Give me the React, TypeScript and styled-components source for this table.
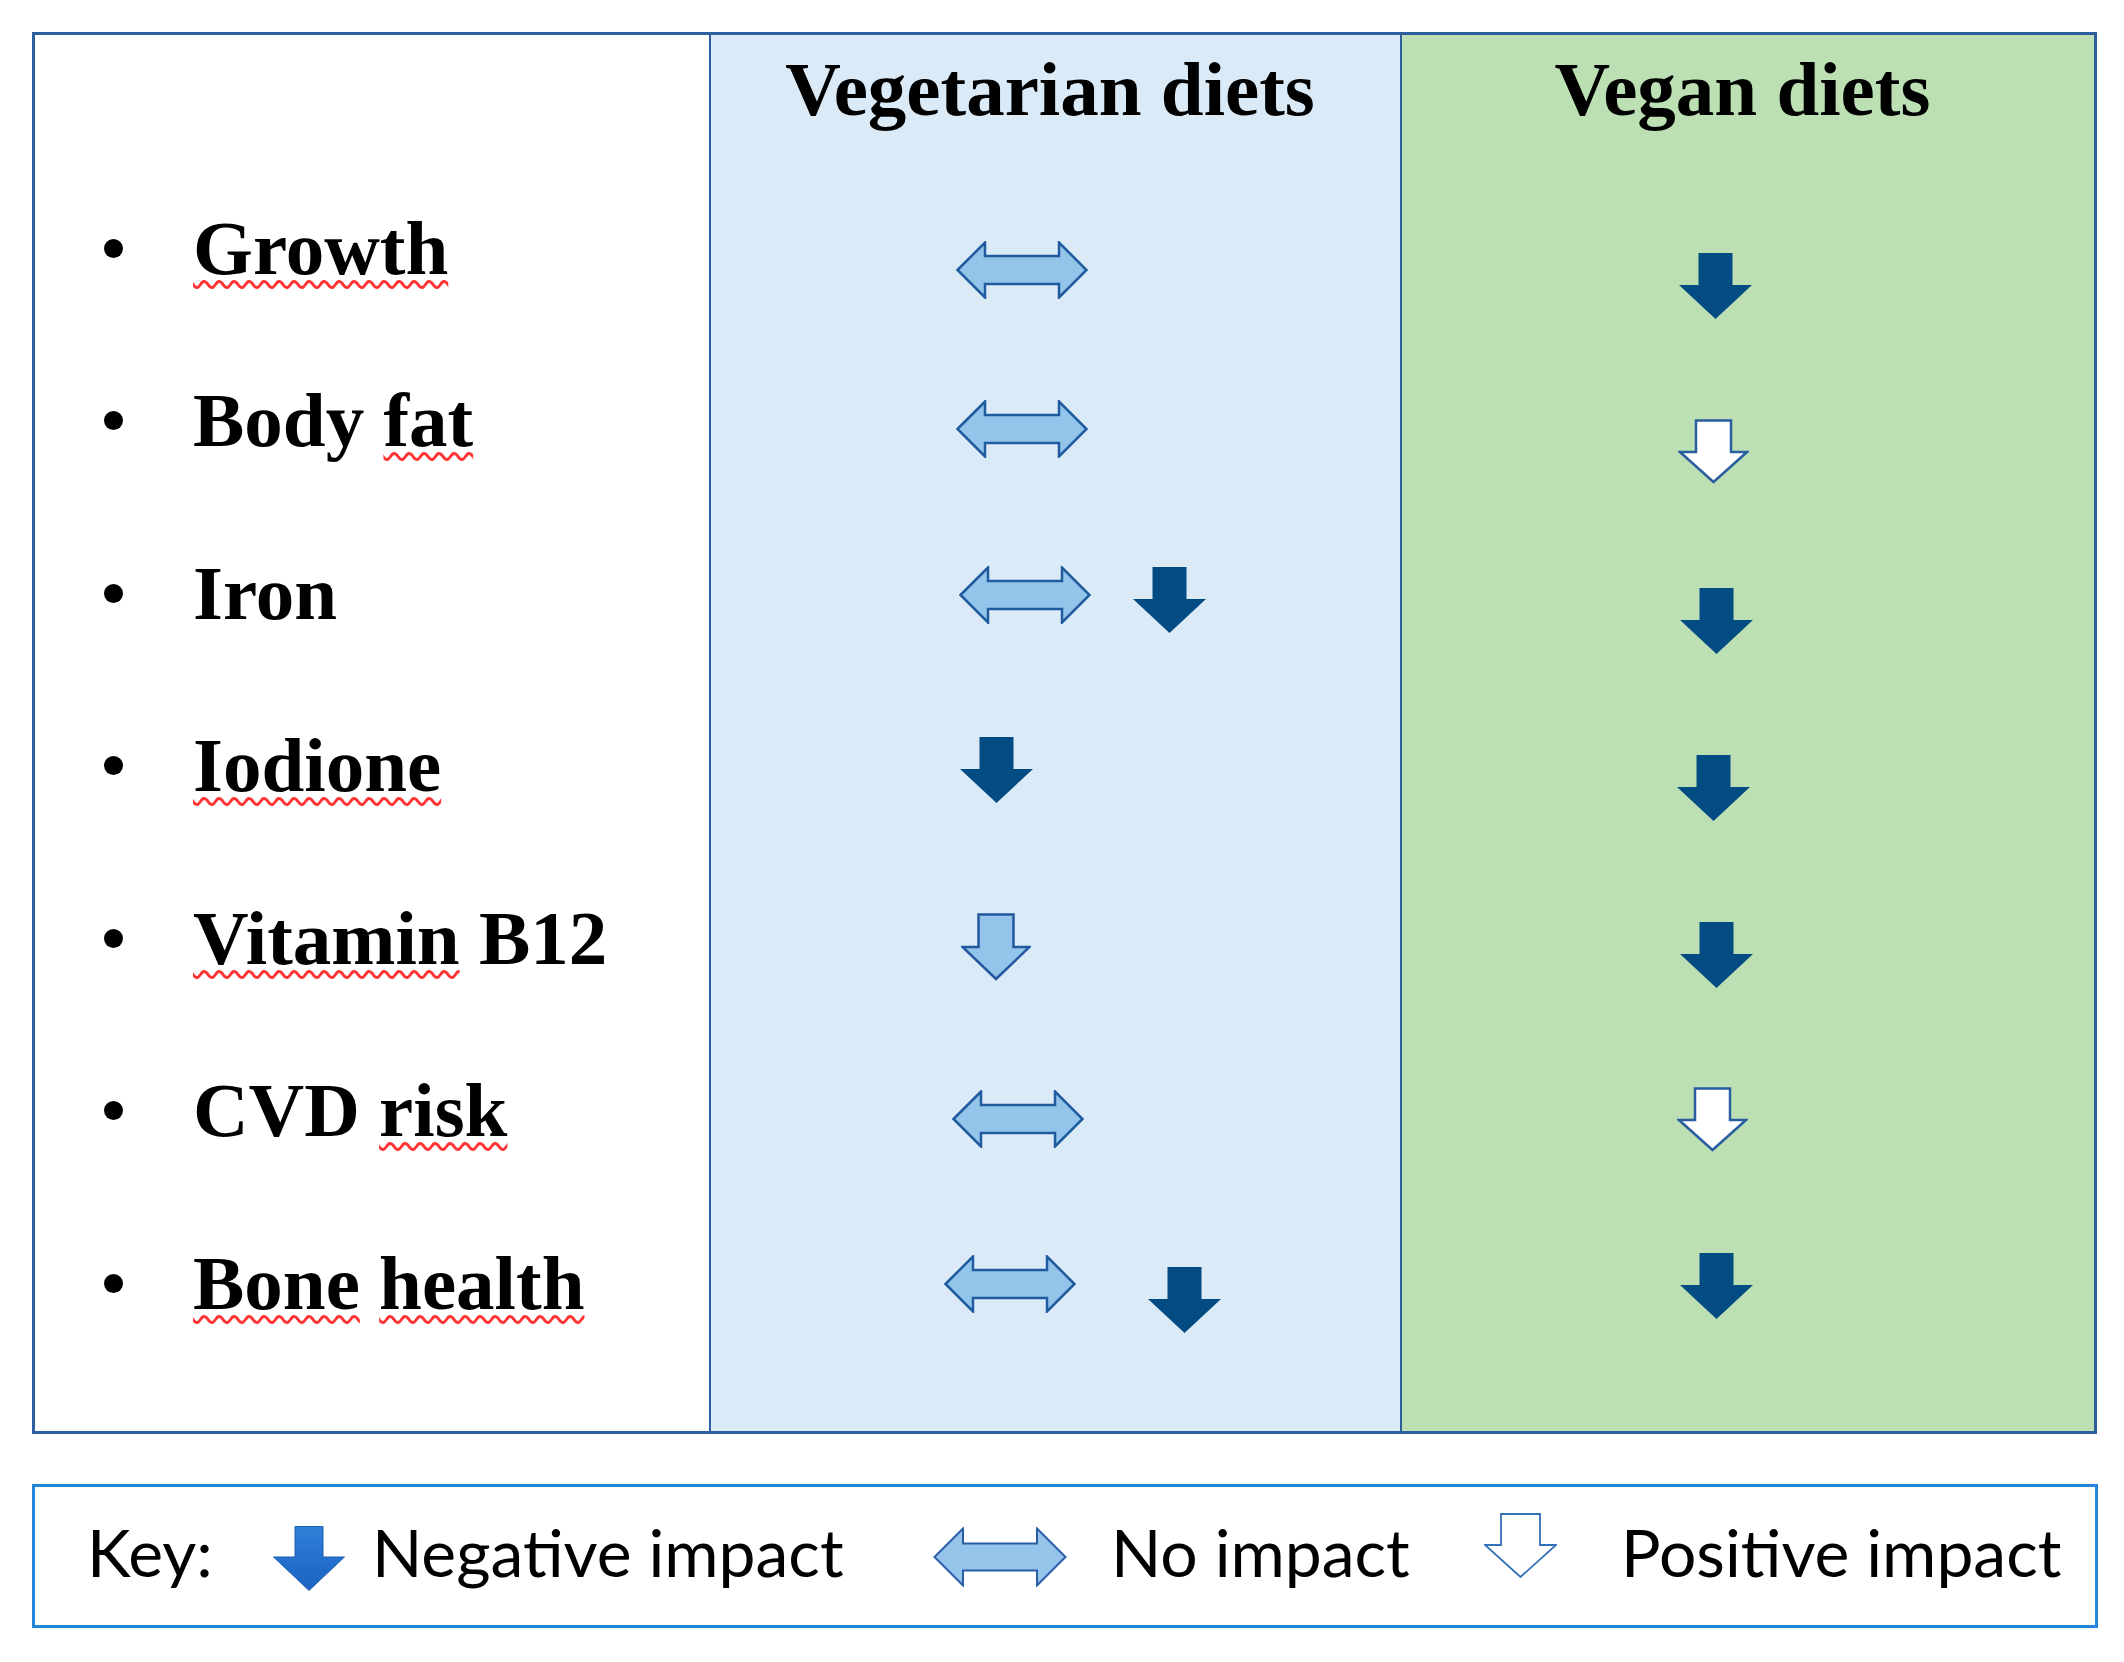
import React from 'react';
import styled, { createGlobalStyle } from 'styled-components';

const GlobalStyle = createGlobalStyle`
  html, body { margin: 0; padding: 0; background: #ffffff; }
  body { width: 2124px; height: 1662px; overflow: hidden; }
`;

const BORDER = '#2d5f9f';

const Page = styled.div`
  box-sizing: border-box;
  width: 2124px;
  height: 1662px;
  padding: 32px 0 0 32px;
  display: flex;
  flex-direction: column;
  gap: 50px;
  font-family: "Liberation Serif", "Times New Roman", serif;
  color: #000;
`;

const Table = styled.div`
  box-sizing: border-box;
  width: 2065px;
  border: 3px solid ${BORDER};
  display: grid;
  grid-template-columns: 674px 691px 694px;
`;

const Column = styled.div<{ $bg: string; $divider?: boolean }>`
  background: ${(p) => p.$bg};
  border-left: ${(p) => (p.$divider ? `2px solid ${BORDER}` : 'none')};
  display: flex;
  flex-direction: column;
  padding-bottom: 61.5px;
`;

const Header = styled.div`
  box-sizing: border-box;
  height: 127px;
  padding: 16px 11px 0 0;
  text-align: center;
  font-size: 77px;
  line-height: 77px;
  font-weight: 700;
  white-space: nowrap;
`;

const Row = styled.div<{ $pad?: number }>`
  box-sizing: border-box;
  height: 172.5px;
  display: flex;
  align-items: center;
  padding-left: ${(p) => p.$pad ?? 0}px;
`;

const Bullet = styled.span`
  width: 19px;
  height: 19px;
  border-radius: 50%;
  background: #000;
  flex: none;
`;

const Label = styled.span`
  margin-left: 70px;
  font-size: 77px;
  line-height: 77px;
  font-weight: 700;
  white-space: nowrap;
`;

const Misspelt = styled.span`
  text-decoration-line: underline;
  text-decoration-style: wavy;
  text-decoration-color: #ff3434;
  text-decoration-thickness: 2.5px;
  text-underline-offset: 6px;
  text-decoration-skip-ink: none;
`;

const ArrowBox = styled.span<{ $ml: number; $dy: number }>`
  display: flex;
  flex: none;
  margin-left: ${(p) => p.$ml}px;
  margin-top: ${(p) => (p.$dy > 0 ? p.$dy * 2 : 0)}px;
  margin-bottom: ${(p) => (p.$dy < 0 ? -p.$dy * 2 : 0)}px;
`;

const KeyBox = styled.div`
  box-sizing: border-box;
  width: 2066px;
  height: 144px;
  border: 3px solid #2586d9;
  display: flex;
  align-items: center;
  padding-left: 52px;
  font-family: Lato, "Open Sans", "Liberation Sans", sans-serif;
  color: #000;
`;

const KeyText = styled.span<{ $w: number; $ml: number }>`
  flex: none;
  width: ${(p) => p.$w}px;
  margin-left: ${(p) => p.$ml}px;
  margin-bottom: 9px;
  font-size: 66px;
  line-height: 66px;
  white-space: nowrap;
`;

type Kind = 'both' | 'neg' | 'pos' | 'light' | 'keyNeg' | 'keyBoth' | 'keyPos';

const ArrowIcon: React.FC<{ kind: Kind }> = ({ kind }) => {
  switch (kind) {
    case 'both':
      return (
        <svg width="132" height="58" viewBox="0 0 132 58">
          <polygon
            points="1.5,29 29,1.5 29,15 103,15 103,1.5 130.5,29 103,56.5 103,43 29,43 29,56.5"
            fill="#93c5ea"
            stroke="#1f5b9e"
            strokeWidth="2.5"
            strokeLinejoin="miter"
          />
        </svg>
      );
    case 'neg':
      return (
        <svg width="73" height="66" viewBox="0 0 73 66">
          <polygon points="19.5,0 53.5,0 53.5,32 73,32 36.5,66 0,32 19.5,32" fill="#034c83" />
        </svg>
      );
    case 'pos':
      return (
        <svg width="71" height="65" viewBox="0 0 71 65">
          <polygon
            points="18,1.5 53,1.5 53,33 69,33 35.5,63 2,33 18,33"
            fill="#ffffff"
            stroke="#2a5e9e"
            strokeWidth="2.5"
          />
        </svg>
      );
    case 'light':
      return (
        <svg width="70" height="68" viewBox="0 0 70 68">
          <polygon
            points="17.5,1.5 52.5,1.5 52.5,34 68.5,34 35,66 1.5,34 17.5,34"
            fill="#93c5ea"
            stroke="#2358a0"
            strokeWidth="2.5"
          />
        </svg>
      );
    case 'keyNeg':
      return (
        <svg width="72" height="65" viewBox="0 0 72 65">
          <defs>
            <linearGradient id="keyNegGrad" x1="0" y1="0" x2="0" y2="1">
              <stop offset="0" stopColor="#2f7fd8" />
              <stop offset="1" stopColor="#1a63c2" />
            </linearGradient>
          </defs>
          <polygon
            points="22,0.5 50,0.5 50,31 71.5,31 36,64.5 0.5,31 22,31"
            fill="url(#keyNegGrad)"
            stroke="#1f5fb3"
            strokeWidth="1"
          />
        </svg>
      );
    case 'keyBoth':
      return (
        <svg width="134" height="60" viewBox="0 0 134 60">
          <polygon
            points="1.5,30 30,1.5 30,16.5 104,16.5 104,1.5 132.5,30 104,58.5 104,43.5 30,43.5 30,58.5"
            fill="#95c4ea"
            stroke="#2a5fa8"
            strokeWidth="2"
          />
        </svg>
      );
    case 'keyPos':
      return (
        <svg width="73" height="65" viewBox="0 0 73 65">
          <polygon
            points="17,1 56,1 56,32 72,32 36.5,64 1,32 17,32"
            fill="#ffffff"
            stroke="#3370b8"
            strokeWidth="1.8"
          />
        </svg>
      );
  }
};

type Mark = { k: Kind; ml: number; dy: number };
type Word = { t: string; err?: boolean };
type RowData = { label: Word[]; veg: Mark[]; vegan: Mark[] };

const rows: RowData[] = [
  {
    label: [{ t: 'Growth', err: true }],
    veg: [{ k: 'both', ml: 245, dy: 22 }],
    vegan: [{ k: 'neg', ml: 277, dy: 38 }],
  },
  {
    label: [{ t: 'Body' }, { t: 'fat', err: true }],
    veg: [{ k: 'both', ml: 245, dy: 8 }],
    vegan: [{ k: 'pos', ml: 276, dy: 31 }],
  },
  {
    label: [{ t: 'Iron' }],
    veg: [
      { k: 'both', ml: 248, dy: 2 },
      { k: 'neg', ml: 42, dy: 7 },
    ],
    vegan: [{ k: 'neg', ml: 278, dy: 28 }],
  },
  {
    label: [{ t: 'Iodione', err: true }],
    veg: [{ k: 'neg', ml: 249, dy: 4 }],
    vegan: [{ k: 'neg', ml: 275, dy: 22 }],
  },
  {
    label: [{ t: 'Vitamin', err: true }, { t: 'B12' }],
    veg: [{ k: 'light', ml: 250, dy: 9 }],
    vegan: [{ k: 'neg', ml: 278, dy: 17 }],
  },
  {
    label: [{ t: 'CVD' }, { t: 'risk', err: true }],
    veg: [{ k: 'both', ml: 241, dy: 8 }],
    vegan: [{ k: 'pos', ml: 275, dy: 9 }],
  },
  {
    label: [{ t: 'Bone', err: true }, { t: 'health', err: true }],
    veg: [
      { k: 'both', ml: 233, dy: 1 },
      { k: 'neg', ml: 72, dy: 17 },
    ],
    vegan: [{ k: 'neg', ml: 278, dy: 3 }],
  },
];

const LabelText: React.FC<{ words: Word[] }> = ({ words }) => (
  <Label>
    {words.map((w, i) => (
      <React.Fragment key={i}>
        {i > 0 ? ' ' : null}
        {w.err ? <Misspelt>{w.t}</Misspelt> : w.t}
      </React.Fragment>
    ))}
  </Label>
);

const Marks: React.FC<{ marks: Mark[] }> = ({ marks }) => (
  <Row>
    {marks.map((m, i) => (
      <ArrowBox key={i} $ml={m.ml} $dy={m.dy}>
        <ArrowIcon kind={m.k} />
      </ArrowBox>
    ))}
  </Row>
);

export default function App() {
  return (
    <>
      <GlobalStyle />
      <Page>
        <Table>
          <Column $bg="#ffffff">
            <Header />
            {rows.map((r, i) => (
              <Row key={i} $pad={69}>
                <Bullet />
                <LabelText words={r.label} />
              </Row>
            ))}
          </Column>
          <Column $bg="#daeaf7" $divider>
            <Header>Vegetarian diets</Header>
            {rows.map((r, i) => (
              <Marks key={i} marks={r.veg} />
            ))}
          </Column>
          <Column $bg="#bce0b4" $divider>
            <Header>Vegan diets</Header>
            {rows.map((r, i) => (
              <Marks key={i} marks={r.vegan} />
            ))}
          </Column>
        </Table>
        <KeyBox>
          <KeyText $w={119} $ml={0}>Key:</KeyText>
          <ArrowBox $ml={67} $dy={2}>
            <ArrowIcon kind="keyNeg" />
          </ArrowBox>
          <KeyText $w={471} $ml={27}>Negative impact</KeyText>
          <ArrowBox $ml={90} $dy={1}>
            <ArrowIcon kind="keyBoth" />
          </ArrowBox>
          <KeyText $w={298} $ml={44}>No impact</KeyText>
          <ArrowBox $ml={75} $dy={-11}>
            <ArrowIcon kind="keyPos" />
          </ArrowBox>
          <KeyText $w={441} $ml={64}>Positive impact</KeyText>
        </KeyBox>
      </Page>
    </>
  );
}
